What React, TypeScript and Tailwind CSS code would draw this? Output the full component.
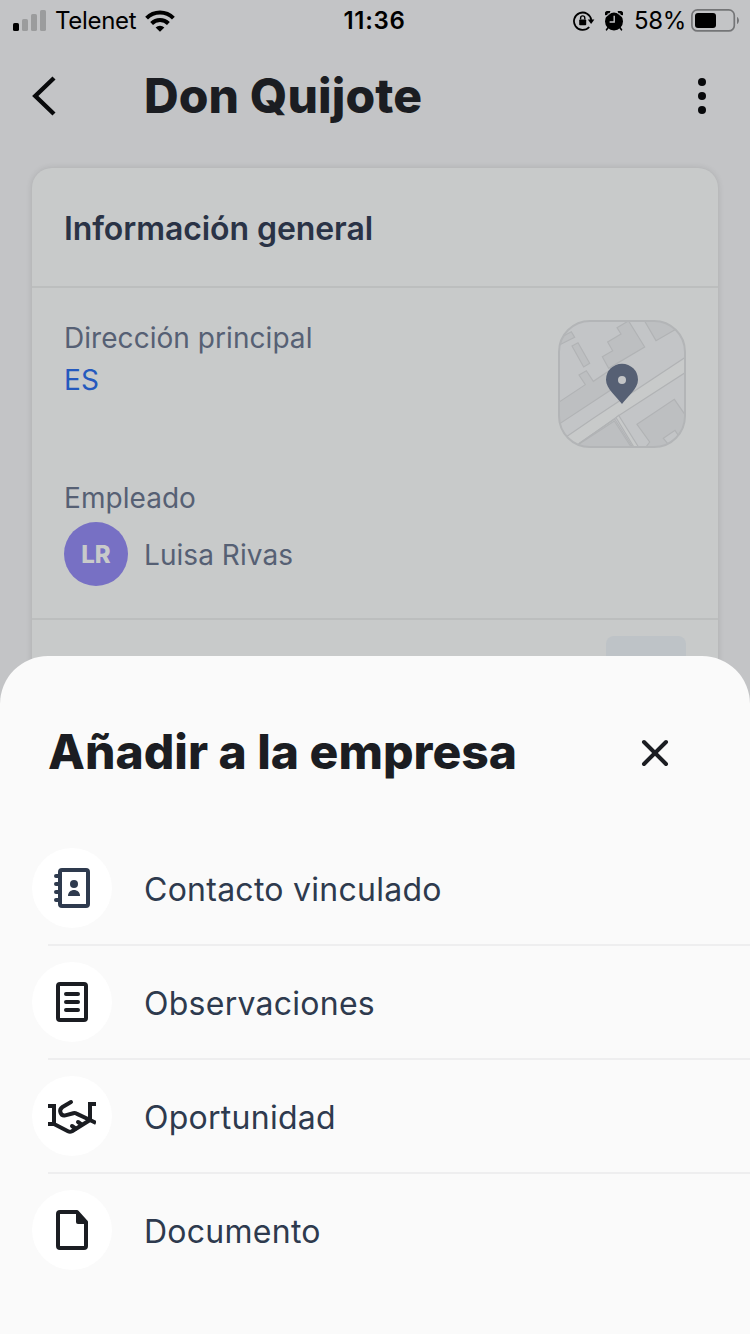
import React from "react";

const INK = "#1b1d22";
const NAVY = "#2e3a4e";

function SignalIcon() {
  return (
    <svg className="block" width="34" height="22" viewBox="0 0 34 22">
      <rect x="0" y="13" width="6" height="8" rx="1.6" fill="#000" />
      <rect x="9" y="9" width="6" height="12" rx="1.6" fill="#9b9c9d" />
      <rect x="18" y="4" width="6" height="17" rx="1.6" fill="#9b9c9d" />
      <rect x="27" y="0" width="6" height="21" rx="1.6" fill="#9b9c9d" />
    </svg>
  );
}

function WifiIcon() {
  return (
    <svg className="block" width="30" height="22" viewBox="0 0 30 22">
      <g fill="none" stroke="#000" strokeWidth="4">
        <path d="M1.6 8.1a19 19 0 0 1 26.800 0" />
        <path d="M6.600 13.500a12 12 0 0 1 16.800 0" />
      </g>
      <path d="M15 21.800l-4.400-4.200a6.200 6.200 0 0 1 8.800 0z" fill="#000" />
    </svg>
  );
}

function RotationLockIcon() {
  return (
    <svg className="block" width="22" height="20" viewBox="0 0 22 20">
      <path d="M16.200 16A8.700 8.700 0 1 1 18.300 9" fill="none" stroke="#000" strokeWidth="1.800" />
      <path d="M14.800 8.600h6.600l-3.300 4.400z" fill="#000" />
      <rect x="6.200" y="8.400" width="7" height="5.800" rx="0.800" fill="#000" />
      <path d="M7.600 8.600V7a2.100 2.100 0 0 1 4.200 0v1.600" fill="none" stroke="#000" strokeWidth="1.400" />
    </svg>
  );
}

function AlarmIcon() {
  return (
    <svg className="block" width="18" height="20" viewBox="0 0 18 20">
      <circle cx="9" cy="10.400" r="9" fill="#000" />
      <path d="M.9 4.100C.7 1.600 2.800 .4 5 1.200M17.100 4.100C17.300 1.600 15.200 .4 13 1.200" fill="none" stroke="#000" strokeWidth="2.800" />
      <path d="M1.600 5.400L6.200 1.400M16.400 5.400L11.800 1.400" fill="none" stroke="#c3c4c6" strokeWidth="0.800" />
      <path d="M3.200 16.500L1.500 18.800M14.800 16.500L16.500 18.800" stroke="#000" strokeWidth="1.600" strokeLinecap="round" />
      <path d="M9.200 4.800V11H4.600" fill="none" stroke="#c3c4c6" strokeWidth="1.400" />
    </svg>
  );
}

function BatteryIcon() {
  return (
    <svg className="block" width="48" height="23" viewBox="0 0 48 23">
      <rect x="0.900" y="0.900" width="42.400" height="21" rx="5.500" fill="none" stroke="#747577" strokeWidth="1.700" />
      <rect x="4" y="4" width="21" height="15" rx="3" fill="#000" />
      <path d="M46 8v7c2.600-1.200 2.600-5.800 0-7z" fill="#747577" />
    </svg>
  );
}

function MapThumb() {
  return (
    <svg className="block" width="128" height="128" viewBox="54 45 384 384">
      <defs>
        <clipPath id="tile">
          <rect x="57" y="48" width="378" height="378" rx="93" />
        </clipPath>
      </defs>
      <g clipPath="url(#tile)" strokeWidth="3.500" stroke="#b1b3b5">
        <rect x="54" y="45" width="384" height="384" fill="#c3c5c7" stroke="none" />
        <path fill="#bdbfc1" d="M50 104L94 80L104 97L50 124Z" />
        <path fill="#bdbfc1" d="M96 123L114 113L149 175L131 186Z" />
        <path fill="#bdbfc1" d="M264 45L314 126L206 190L187 155L218 137L203 111L243 87L231 68L270 45Z" />
        <path fill="#bdbfc1" d="M312 45L348 107L410 71L440 45Z" />
        <path fill="#bdbfc1" d="M50 296L136 239L117 210L139 197L160 229L206 198L235 240L50 362Z" />
        <path fill="#c8caca" d="M78 396L160 340L440 154V200L240 329L118 415L90 440Z" />
        <path fill="#bdbfc1" d="M113 420L223 348L276 430H113Z" />
        <path fill="none" d="M118 415L224 342L280 430" />
        <path fill="#c8caca" d="M228 338L236 331L298 430H284Z" />
        <path fill="#bdbfc1" d="M291 358L403 283L440 336V430H315L329 411Z" />
        <path fill="#c3c5c7" d="M370 400L405 376L418 396L395 430Z" />
      </g>
      <rect x="57" y="48" width="378" height="378" rx="93" fill="none" stroke="#b3b5b7" strokeWidth="6" />
      <path d="M246 297C232 276 198 252 198 224a48 48 0 0 1 96 0C294 252 260 276 246 297z" fill="#566074" />
      <circle cx="246" cy="225" r="12" fill="#c3c5c7" />
    </svg>
  );
}

function ContactIcon() {
  return (
    <svg width="48" height="48" viewBox="0 0 48 48">
      <rect x="12" y="6" width="28" height="36" rx="2" fill="none" stroke={NAVY} strokeWidth="4" />
      <path d="M8 12h4M8 20h4M8 28h4M8 36h4" stroke={NAVY} strokeWidth="4" strokeLinecap="round" />
      <circle cx="26" cy="20" r="4" fill={NAVY} />
      <path d="M20 32c0-8 12-8 12 0z" fill={NAVY} />
    </svg>
  );
}

function NotesIcon() {
  return (
    <svg width="48" height="48" viewBox="0 0 48 48" fill="none" stroke={INK} strokeWidth="4" strokeLinecap="round">
      <rect x="10" y="6" width="28" height="36" rx="2" />
      <path d="M18 16h12M18 24h12M18 32h12" />
    </svg>
  );
}

function HandshakeIcon() {
  return (
    <svg width="48" height="48" viewBox="0 0 48 48" fill="none" stroke={INK} strokeWidth="4">
      <path d="M0 14h6v18M48 12h-6v16" />
      <path d="M0 32h6l14 7.300c1.300 .7 2.700 .7 4 0L42 28l6 3" strokeLinejoin="round" />
      <path d="M23 10L14.500 15c-4.300 3-2 9.400 2.800 8.400l8-2.200q1.700-.4 3.200 .4L42 28" strokeLinecap="round" strokeLinejoin="round" />
      <path d="M24 34l3.500 2.500M30 30l3.500 2.500" strokeLinecap="round" />
    </svg>
  );
}

function DocumentIcon() {
  return (
    <svg width="48" height="48" viewBox="0 0 48 48">
      <path d="M29 6H12a2 2 0 0 0-2 2v32a2 2 0 0 0 2 2h24a2 2 0 0 0 2-2V16z" fill="none" stroke={INK} strokeWidth="4" strokeLinejoin="round" />
      <path d="M28 6v10a2 2 0 0 0 2 2h9z" fill={INK} />
    </svg>
  );
}

const actions = [
  { label: "Contacto vinculado", icon: <ContactIcon /> },
  { label: "Observaciones", icon: <NotesIcon /> },
  { label: "Oportunidad", icon: <HandshakeIcon /> },
  { label: "Documento", icon: <DocumentIcon /> },
];

export default function App() {
  return (
    <div className="relative h-[1334px] w-[750px] overflow-hidden bg-[#c3c4c6] font-['Inter',sans-serif]">
      <div className="grid h-10 grid-cols-3 items-center pr-[11px] pl-[13px] text-[24px] leading-10 text-black">
        <div className="flex items-center">
          <SignalIcon />
          <span className="ml-2 pt-px tracking-[-0.3px]">Telenet</span>
          <span className="ml-[9px]"><WifiIcon /></span>
        </div>
        <div className="pt-px pr-[3px] text-center font-semibold tracking-[0.7px]">11:36</div>
        <div className="flex items-center justify-end">
          <RotationLockIcon />
          <span className="ml-[10px]"><AlarmIcon /></span>
          <span className="ml-[11px] pt-px tracking-[-0.3px]">58%</span>
          <span className="ml-[5px]"><BatteryIcon /></span>
        </div>
      </div>

      <header className="flex h-[112px] items-center px-8">
        <svg width="24" height="40" viewBox="0 0 24 40" fill="none" stroke="#08090b" strokeWidth="4.400">
          <path d="M22 2L3.300 20l18.700 18" />
        </svg>
        <h1 className="ml-[88px] flex-1 text-[48px] leading-[56px] font-extrabold tracking-[0.1px] text-[#1b1d22]">Don Quijote</h1>
        <svg className="mr-[11px]" width="10" height="38" viewBox="0 0 10 38" fill="#08090b">
          <circle cx="5" cy="5" r="4" />
          <circle cx="5" cy="19" r="4" />
          <circle cx="5" cy="33" r="4" />
        </svg>
      </header>

      <main className="mx-8 mt-4 h-[560px] rounded-t-[20px] bg-[#c8caca] shadow-[0_0_6px_rgba(0,0,0,0.12)]">
        <h2 className="h-[120px] border-b-2 border-[#bcbebe] px-8 pt-[38px] text-[32px] leading-[46px] font-semibold tracking-[-0.08px] text-[#2a3346]">
          Información general
        </h2>
        <section className="h-[332px] border-b-2 border-[#bcbebe] px-8 pt-8 text-[28px] leading-[36px] tracking-[0.05px] text-[#566074]">
          <div className="flex h-[160px] justify-between">
            <div>
              <p>Dirección principal</p>
              <p className="mt-[6px] text-[#2459be]">ES</p>
            </div>
            <MapThumb />
          </div>
          <p>Empleado</p>
          <div className="mt-[6px] flex items-center gap-4">
            <div className="flex size-16 items-center justify-center rounded-full bg-[#7770c4] pt-[2px] text-[24px] font-extrabold text-[#c8caca]">LR</div>
            <span className="pt-[2px]">Luisa Rivas</span>
          </div>
        </section>
        <div className="flex justify-end px-8 pt-4">
          <div className="h-16 w-20 rounded-[8px] bg-[#bec3c7]" />
        </div>
      </main>

      <div className="absolute inset-x-0 top-[656px] bottom-0 rounded-t-[48px] bg-[#fafafa]">
        <div className="flex h-[184px] items-center justify-between pt-2 pr-[81px] pl-12">
          <h2 className="text-[48px] leading-[56px] font-extrabold text-[#1b1d22]">Añadir a la empresa</h2>
          <svg className="mt-[2px]" width="28" height="28" viewBox="0 0 28 28" stroke="#1b1d22" strokeWidth="4" strokeLinecap="round">
            <path d="M3 3l22 22M25 3L3 25" />
          </svg>
        </div>
        <ul className="flex flex-col">
          {actions.map((action, i) => (
            <li key={action.label} className="flex h-[114px] flex-col">
              <div className="flex h-[104px] items-start pt-2 pl-8">
                <span className="flex size-20 items-center justify-center rounded-full bg-white">{action.icon}</span>
                <span className="ml-8 pt-[22px] text-[32px] leading-10 tracking-[0.26px] text-[#2e3a4e]">{action.label}</span>
              </div>
              {i < actions.length - 1 && <div className="ml-12 h-[2px] bg-[#eeeeef]" />}
            </li>
          ))}
        </ul>
      </div>
    </div>
  );
}
